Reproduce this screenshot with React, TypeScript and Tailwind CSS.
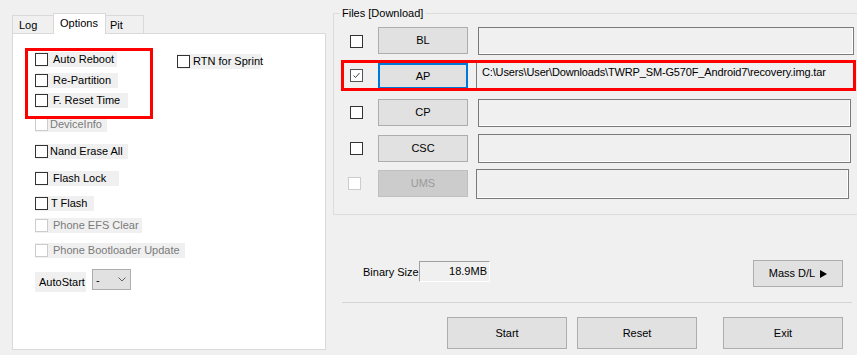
import React from "react";

const Check = () => (
  <svg width="9" height="9" viewBox="0 0 9 9" fill="none">
    <path d="M1.5 4.5 L3.5 6.5 L7.5 2" stroke="#444444" strokeWidth="1" />
  </svg>
);

function Cb({ checked = false, disabled = false }: { checked?: boolean; disabled?: boolean }) {
  return (
    <span
      className={
        disabled
          ? "w-[13px] h-[13px] border border-[#cccccc] bg-white shrink-0 flex items-center justify-center"
          : checked
          ? "w-[13px] h-[13px] border border-[#555555] bg-white shrink-0 flex items-center justify-center"
          : "w-[13px] h-[13px] border border-[#333333] bg-white shrink-0 flex items-center justify-center"
      }
    >
      {checked && <Check />}
    </span>
  );
}

function Opt({
  label,
  w,
  gap,
  disabled = false,
  mt,
}: {
  label: string;
  w: string;
  gap: string;
  disabled?: boolean;
  mt: string;
}) {
  return (
    <div className={`flex items-center h-[15px] bg-[#f0f0f0] ${w} ${mt}`}>
      <Cb disabled={disabled} />
      <span className={`${gap} whitespace-nowrap leading-[15px] ${disabled ? "text-[#7a7a7a]" : "text-black"}`}>
        {label}
      </span>
    </div>
  );
}

function Btn({ label, cls, focused = false, disabled = false, children }: { label?: string; cls: string; focused?: boolean; disabled?: boolean; children?: React.ReactNode }) {
  const base = focused
    ? "border-2 border-[#0078d7] bg-[#e1e1e1] text-black"
    : disabled
    ? "border border-[#bfbfbf] bg-[#cccccc] text-[#9a9a9a]"
    : "border border-[#adadad] bg-[#e1e1e1] text-black";
  return (
    <div className={`${base} ${cls} flex items-center justify-center shrink-0 whitespace-nowrap`}>
      {label}
      {children}
    </div>
  );
}

const fieldCls =
  "border border-[#7a7a7a] shadow-[inset_-1px_-1px_0_#ffffff] bg-[#f0f0f0] shrink-0";

export default function App() {
  return (
    <div className="w-[857px] h-[355px] bg-[#f0f0f0] relative overflow-hidden flex items-start font-['Liberation_Sans',Arial,sans-serif] text-[11px] text-black">
      {/* Left column */}
      <div className="ml-[12px] mt-[13px] w-[314px] flex flex-col shrink-0">
        <div className="flex items-end h-[20px]">
          <div className="w-[41px] h-[18px] border-l border-t border-[#d9d9d9] bg-[#f0f0f0] pl-[6px] leading-[19px]">
            Log
          </div>
          <div className="w-[53px] h-[21px] -mb-[1px] relative z-10 border-l border-t border-r border-[#d9d9d9] bg-white pl-[6px] leading-[19px]">
            Options
          </div>
          <div className="w-[38px] h-[18px] border-t border-r border-[#d9d9d9] bg-[#f0f0f0] pl-[4px] leading-[19px]">
            Pit
          </div>
        </div>
        <div className="relative h-[317px] border border-[#d9d9d9] bg-white pl-[22px] flex flex-col items-start">
          <div className="flex items-start mt-[18px] h-[15px]">
            <Opt label="Auto Reboot" w="w-[82px]" gap="ml-[5px]" mt="" />
            <div className="ml-[60px] mt-[2px]">
              <Opt label="RTN for Sprint" w="w-[84px]" gap="ml-[3px]" mt="" />
            </div>
          </div>
          <Opt label="Re-Partition" w="w-[83px]" gap="ml-[5px]" mt="mt-[6px]" />
          <Opt label="F. Reset Time" w="w-[93px]" gap="ml-[5px]" mt="mt-[5px]" />
          <Opt label="DeviceInfo" w="w-[72px]" gap="ml-[2px]" mt="mt-[9px]" disabled />
          <Opt label="Nand Erase All" w="w-[93px]" gap="ml-[2px]" mt="mt-[12px]" />
          <Opt label="Flash Lock" w="w-[84px]" gap="ml-[5px]" mt="mt-[12px]" />
          <Opt label="T Flash" w="w-[59px]" gap="ml-[3px]" mt="mt-[10px]" />
          <Opt label="Phone EFS Clear" w="w-[107px]" gap="ml-[5px]" mt="mt-[7px]" disabled />
          <Opt label="Phone Bootloader Update" w="w-[150px]" gap="ml-[5px]" mt="mt-[10px]" disabled />
          <div className="flex items-start mt-[11px]">
            <div className="mt-[3px] w-[51px] h-[20px] bg-[#f0f0f0] pl-[4px] leading-[20px]">AutoStart</div>
            <div className="ml-[6px] w-[39px] h-[21px] border border-[#adadad] bg-[#e1e1e1] flex items-center pl-[3px] pr-[4px] justify-between">
              <span className="leading-[18px]">-</span>
              <svg width="8" height="5" viewBox="0 0 8 5" fill="none">
                <path d="M0.5 0.5 L4 4 L7.5 0.5" stroke="#606060" strokeWidth="1" />
              </svg>
            </div>
          </div>
          {/* annotation */}
          <div className="absolute left-[12px] top-[14px] w-[128px] h-[71px] border-[3px] border-[#ff0000]" />
        </div>
      </div>

      {/* Right column */}
      <div className="ml-[7px] w-[524px] shrink-0 flex flex-col">
        <fieldset className="mt-[5px] w-[540px] h-[210px] border border-[#dcdcdc] flex flex-col">
          <legend className="ml-[6px] px-[2px] leading-[16px]">Files [Download]</legend>
          {/* BL */}
          <div className="flex items-start pl-[16px] mt-[6px] h-[28px]">
            <div className="mt-[8px]"><Cb /></div>
            <Btn label="BL" cls="ml-[15px] w-[90px] h-[27px]" />
            <div className={`${fieldCls} ml-[10px] w-[376px] h-[28px]`} />
          </div>
          {/* AP */}
          <div className="relative flex items-start pl-[16px] mt-[8px] h-[28px]">
            <div className="mt-[6px]"><Cb checked /></div>
            <Btn label="AP" cls="ml-[15px] w-[90px] h-[26px]" focused />
            <div className={`${fieldCls} ml-[8px] w-[380px] h-[28px] -mt-[1px] pl-[5px] pt-[2px] leading-[15px] whitespace-nowrap tracking-[-0.15px]`}>
              C:\Users\User\Downloads\TWRP_SM-G570F_Android7\recovery.img.tar
            </div>
            <div className="absolute left-[7px] -top-[3px] w-[515px] h-[31px] border-[3px] border-[#ff0000]" />
          </div>
          {/* CP */}
          <div className="flex items-start pl-[16px] mt-[8px] h-[28px]">
            <div className="mt-[7px]"><Cb /></div>
            <Btn label="CP" cls="ml-[15px] w-[90px] h-[27px]" />
            <div className={`${fieldCls} ml-[10px] w-[373px] h-[28px]`} />
          </div>
          {/* CSC */}
          <div className="flex items-start pl-[16px] mt-[8px] h-[28px]">
            <div className="mt-[7px]"><Cb /></div>
            <Btn label="CSC" cls="ml-[15px] w-[90px] h-[27px]" />
            <div className={`${fieldCls} ml-[10px] w-[373px] h-[29px] -mt-[1px]`} />
          </div>
          {/* UMS */}
          <div className="flex items-start pl-[14px] mt-[7px] h-[28px]">
            <div className="mt-[7px]"><Cb disabled /></div>
            <Btn label="UMS" cls="ml-[17px] w-[90px] h-[27px]" disabled />
            <div className={`${fieldCls} ml-[8px] w-[373px] h-[30px] -mt-[1px]`} />
          </div>
        </fieldset>

        {/* Binary size row */}
        <div className="flex items-start pl-[30px] mt-[45px] h-[27px]">
          <div className="w-[56px] mt-[4px] leading-[16px] whitespace-nowrap">Binary Size</div>
          <div className="mt-[1px] w-[71px] h-[21px] border-t border-l border-[#a0a0a0] border-r border-b border-r-white border-b-white bg-[#f0f0f0] text-right pr-[2px] leading-[19px]">
            18.9MB
          </div>
          <div className="ml-auto mr-[14px]">
            <Btn cls="w-[90px] h-[27px]">
              <span>Mass D/L</span>
              <svg className="ml-[5px]" width="7" height="8" viewBox="0 0 7 8">
                <path d="M0 0 L7 4 L0 8 Z" fill="#000000" />
              </svg>
            </Btn>
          </div>
        </div>

        <div className="mt-[15px] ml-[9px] w-[510px] h-px bg-[#d5d5d5]" />

        <div className="flex mt-[14px]">
          <Btn label="Start" cls="ml-[114px] w-[120px] h-[32px]" />
          <Btn label="Reset" cls="ml-[10px] w-[120px] h-[32px]" />
          <Btn label="Exit" cls="ml-[26px] w-[120px] h-[32px]" />
        </div>
      </div>

      {/* annotation on Options tab */}
      <div className="absolute left-[58px] top-[15px] w-[43px] h-[19px] border-[3px] border-[#ff0000]" />
    </div>
  );
}
